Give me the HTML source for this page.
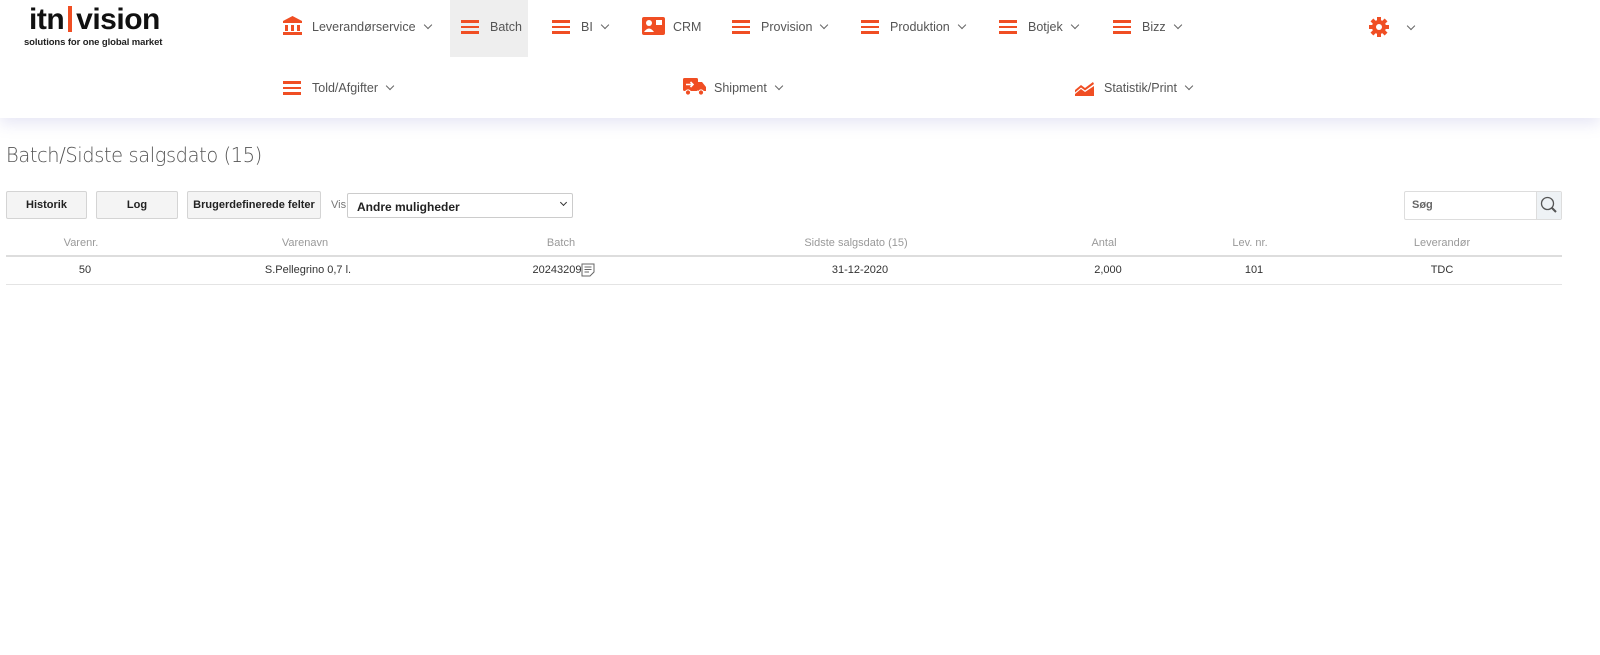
<!DOCTYPE html>
<html><head><meta charset="utf-8"><style>
*{margin:0;padding:0;box-sizing:border-box}
body{width:1600px;height:655px;background:#fff;font-family:"Liberation Sans",Arial,sans-serif;position:relative;overflow:hidden;color:#333}
.hdr{position:absolute;left:0;top:0;width:1600px;height:118px;background:#fff;box-shadow:0 6px 14px rgba(120,120,200,0.18)}
.a{position:absolute}
.nav{position:absolute;font-size:12.5px;color:#555;display:flex;align-items:center;height:20px}
.chev{display:inline-block;width:6px;height:6px;border-right:1.5px solid #666;border-bottom:1.5px solid #666;transform:rotate(45deg);margin-left:9px;margin-top:-4px}
.hb{position:absolute;width:18px;height:14px}
.hb i{position:absolute;left:0;width:18px;height:2.5px;background:#f04e23}
.btn{position:absolute;top:191px;height:28px;background:#f4f4f4;border:1px solid #d4d4d4;border-radius:2px;font-size:11px;font-weight:bold;color:#222;display:flex;align-items:center;justify-content:center}
.th{position:absolute;top:237px;font-size:11px;color:#999;transform:translateX(-50%);white-space:nowrap}
.td{position:absolute;top:264px;font-size:11px;color:#333;transform:translateX(-50%);white-space:nowrap}
</style></head><body>
<div class="hdr"></div>
<div class="a" style="left:29px;top:3px;font-size:30px;font-weight:bold;color:#111;letter-spacing:-0.5px;font-family:'Liberation Sans',sans-serif">itn<span style="display:inline-block;width:4px;height:26px;background:#f04e23;margin:0 4px;vertical-align:-3px"></span>vision</div>
<div class="a" style="left:24px;top:37px;font-size:9.5px;color:#222;font-weight:bold;letter-spacing:-0.1px">solutions for one global market</div>
<div class="a" style="left:450px;top:0;width:78px;height:57px;background:#eeeeee"></div>
<svg class="a" style="left:283px;top:16px" width="19" height="19" viewBox="0 0 19 19"><path d="M9.5 0 L19 5 L19 7 L0 7 L0 5Z" fill="#f04e23"/><rect x="2" y="9" width="3" height="6" fill="#f04e23"/><rect x="8" y="9" width="3" height="6" fill="#f04e23"/><rect x="14" y="9" width="3" height="6" fill="#f04e23"/><rect x="0" y="16" width="19" height="3" fill="#f04e23"/></svg>
<div class="nav" style="left:312px;top:17px">Leverandørservice<span class="chev"></span></div>
<div class="hb" style="left:461px;top:20px"><i style="top:0"></i><i style="top:5.5px"></i><i style="top:11px"></i></div>
<div class="nav" style="left:490px;top:17px">Batch</div>
<div class="hb" style="left:552px;top:20px"><i style="top:0"></i><i style="top:5.5px"></i><i style="top:11px"></i></div>
<div class="nav" style="left:581px;top:17px">BI<span class="chev"></span></div>
<svg class="a" style="left:642px;top:17px" width="23" height="18" viewBox="0 0 23 18"><rect width="23" height="18" rx="2" fill="#f04e23"/><circle cx="7" cy="6" r="3" fill="#fff"/><path d="M2 15 Q7 8 12 15Z" fill="#fff"/><rect x="14" y="3" width="6" height="5" fill="#fff"/></svg>
<div class="nav" style="left:673px;top:17px">CRM</div>
<div class="hb" style="left:732px;top:20px"><i style="top:0"></i><i style="top:5.5px"></i><i style="top:11px"></i></div>
<div class="nav" style="left:761px;top:17px">Provision<span class="chev"></span></div>
<div class="hb" style="left:861px;top:20px"><i style="top:0"></i><i style="top:5.5px"></i><i style="top:11px"></i></div>
<div class="nav" style="left:890px;top:17px">Produktion<span class="chev"></span></div>
<div class="hb" style="left:999px;top:20px"><i style="top:0"></i><i style="top:5.5px"></i><i style="top:11px"></i></div>
<div class="nav" style="left:1028px;top:17px">Botjek<span class="chev"></span></div>
<div class="hb" style="left:1113px;top:20px"><i style="top:0"></i><i style="top:5.5px"></i><i style="top:11px"></i></div>
<div class="nav" style="left:1142px;top:17px">Bizz<span class="chev"></span></div>
<svg class="a" style="left:1369px;top:17px" width="20" height="20" viewBox="0 0 20 20"><g fill="#f04e23"><circle cx="10" cy="10" r="7"/><rect x="8" y="0" width="4" height="20"/><rect x="0" y="8" width="20" height="4"/><rect x="8" y="0" width="4" height="20" transform="rotate(45 10 10)"/><rect x="8" y="0" width="4" height="20" transform="rotate(-45 10 10)"/></g><circle cx="10" cy="10" r="3" fill="#fff"/></svg>
<span class="chev a" style="left:1399px;top:27px"></span>
<div class="hb" style="left:283px;top:81px"><i style="top:0"></i><i style="top:5.5px"></i><i style="top:11px"></i></div>
<div class="nav" style="left:312px;top:78px">Told/Afgifter<span class="chev"></span></div>
<svg class="a" style="left:683px;top:78px" width="23" height="18" viewBox="0 0 23 18"><rect x="0" y="0" width="15" height="13" rx="1.5" fill="#f04e23"/><path d="M15 4 L19 4 L23 9 L23 13 L15 13Z" fill="#f04e23"/><circle cx="5" cy="14.5" r="2.6" fill="#f04e23" stroke="#fff"/><circle cx="18" cy="14.5" r="2.6" fill="#f04e23" stroke="#fff"/><path d="M3 6.5 H10 M7.5 4 L10 6.5 L7.5 9" stroke="#fff" stroke-width="1.6" fill="none"/></svg>
<div class="nav" style="left:714px;top:78px">Shipment<span class="chev"></span></div>
<svg class="a" style="left:1075px;top:81px" width="19" height="15" viewBox="0 0 19 15"><path d="M0 9 L6 4 L10 7 L18 1 L19 3 L10 9.5 L6 6.5 L0 11.5Z" fill="#f04e23"/><path d="M0 15 L0 13 L6 8 L10 11 L19 5 L19 15Z" fill="#f04e23"/></svg>
<div class="nav" style="left:1104px;top:78px">Statistik/Print<span class="chev"></span></div>
<div class="a" style="left:6px;top:143px;font-size:20px;color:#555;font-family:'DejaVu Sans','Liberation Sans',sans-serif;font-weight:300;letter-spacing:-0.4px;transform:scaleX(0.97);transform-origin:left">Batch/Sidste salgsdato (15)</div>
<div class="btn" style="left:6px;width:81px">Historik</div>
<div class="btn" style="left:96px;width:82px">Log</div>
<div class="btn" style="left:187px;width:134px">Brugerdefinerede felter</div>
<div class="a" style="left:331px;top:199px;font-size:11px;color:#777">Vis</div>
<div class="a" style="left:347px;top:193px;width:226px;height:25px;border:1px solid #ccc;border-radius:2px;font-size:12px;font-weight:bold;color:#222;padding:6px 0 0 9px">Andre muligheder<span class="chev" style="position:absolute;right:6px;top:10px;border-color:#333;width:5px;height:5px"></span></div>
<div class="a" style="left:1404px;top:191px;width:158px;height:29px;border:1px solid #ddd;border-radius:2px"></div>
<div class="a" style="left:1536px;top:192px;width:25px;height:27px;background:#eef2f5;border-left:1px solid #ddd"></div>
<svg class="a" style="left:1540px;top:196px" width="18" height="18" viewBox="0 0 18 18"><circle cx="7.5" cy="7.5" r="6" stroke="#555" stroke-width="1.3" fill="none"/><path d="M12 12 L16 16" stroke="#555" stroke-width="2"/></svg>
<div class="a" style="left:1412px;top:199px;font-size:11px;font-weight:bold;color:#666">Søg</div>
<div class="th" style="left:81px">Varenr.</div>
<div class="th" style="left:305px">Varenavn</div>
<div class="th" style="left:561px">Batch</div>
<div class="th" style="left:856px">Sidste salgsdato (15)</div>
<div class="th" style="left:1104px">Antal</div>
<div class="th" style="left:1250px">Lev. nr.</div>
<div class="th" style="left:1442px">Leverandør</div>
<div class="a" style="left:6px;top:255px;width:1556px;height:2px;background:#ddd"></div>
<div class="td" style="left:85px">50</div>
<div class="td" style="left:308px">S.Pellegrino 0,7 l.</div>
<div class="td" style="left:557px">20243209</div>
<svg class="a" style="left:581px;top:263px" width="14" height="14" viewBox="0 0 14 14"><path d="M1 1 H13 V9 L9 13 H1Z" fill="none" stroke="#666"/><path d="M3.5 4 H10.5 M3.5 6.5 H10.5 M3.5 9 H8" stroke="#666"/></svg>
<div class="td" style="left:860px">31-12-2020</div>
<div class="td" style="left:1108px">2,000</div>
<div class="td" style="left:1254px">101</div>
<div class="td" style="left:1442px">TDC</div>
<div class="a" style="left:6px;top:284px;width:1556px;height:1px;background:#e4e4e4"></div>
</body></html>
